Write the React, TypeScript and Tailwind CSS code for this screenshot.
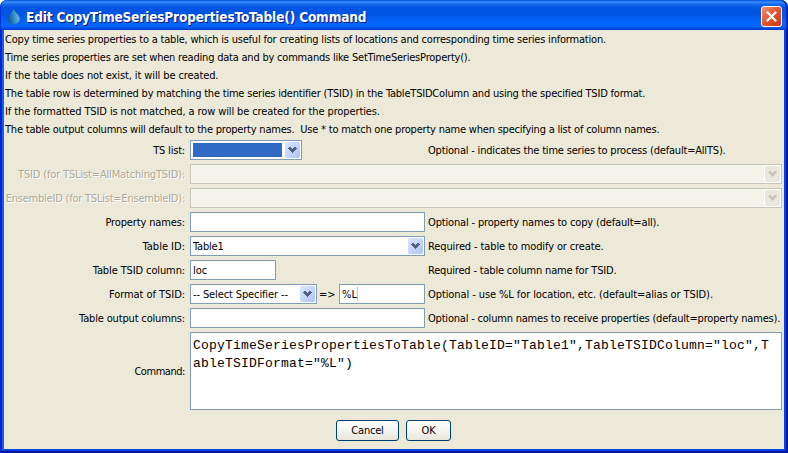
import type { ReactNode } from "react";

const sans = "font-['DejaVu_Sans_Condensed','DejaVu_Sans',sans-serif] [font-stretch:condensed]";

function Chevron({ disabled = false }: { disabled?: boolean }) {
  return (
    <div
      className={
        disabled
          ? "my-px mr-px flex w-[15px] shrink-0 items-center justify-center rounded-[2px] bg-[#e9e8df] shadow-[0_0_0_1px_#fff]"
          : "my-px mr-px flex w-[15px] shrink-0 items-center justify-center rounded-[2px] bg-linear-to-br from-[#dbe5ff] via-[#c5d5fc] to-[#adc2f5]"
      }
    >
      <svg width="9" height="6" viewBox="0 0 9 6" shapeRendering="crispEdges" className="shrink-0">
        <path
          d="M1 0h2v1h1v1h1v-1h1v-1h2v1h1v1h-1v1h-1v1h-1v1h-1v1h-1v-1h-1v-1h-1v-1h-1v-1h-1v-1h1z"
          fill={disabled ? "#c9c7ba" : "#4d6185"}
        />
      </svg>
    </div>
  );
}

function Combo({ className, disabled = false, children }: { className: string; disabled?: boolean; children?: ReactNode }) {
  return (
    <div
      className={`flex h-5 shrink-0 border ${disabled ? "border-[#c9c7ba] bg-[#f5f4ea]" : "border-[#7f9db9] bg-white"} ${className}`}
    >
      <div className="flex min-w-0 flex-1 items-center">{children}</div>
      <Chevron disabled={disabled} />
    </div>
  );
}

function Field({ className, children }: { className: string; children?: ReactNode }) {
  return <div className={`flex h-5 shrink-0 items-center border border-[#7f9db9] bg-white pl-0.5 ${className}`}>{children}</div>;
}

function Row({ label, labelClass = "", hint, hintClass = "", disabled = false, children }: {
  label: string; labelClass?: string; hint?: string; hintClass?: string; disabled?: boolean; children: ReactNode;
}) {
  return (
    <div className="flex h-5 items-center">
      <div className={`flex w-[182px] shrink-0 justify-end pt-0.5 pr-px whitespace-nowrap ${disabled ? "text-[#aca899] [text-shadow:1px_1px_0_#fff]" : ""}`}>
        <span className={labelClass}>{label}</span>
      </div>
      <div className={`ml-1 flex shrink-0 items-center ${hint ? "w-[238px]" : "w-[592px]"}`}>{children}</div>
      {hint && <span className={`pt-0.5 whitespace-nowrap ${hintClass}`}>{hint}</span>}
    </div>
  );
}

const notes = [
  { text: "Copy time series properties to a table, which is useful for creating lists of locations and corresponding time series information.", cls: "tracking-[-0.2px]" },
  { text: "Time series properties are set when reading data and by commands like SetTimeSeriesProperty().", cls: "tracking-[-0.21px]" },
  { text: "If the table does not exist, it will be created.", cls: "tracking-[-0.11px]" },
  { text: "The table row is determined by matching the time series identifier (TSID) in the TableTSIDColumn and using the specified TSID format.", cls: "tracking-[-0.205px]" },
  { text: "If the formatted TSID is not matched, a row will be created for the properties.", cls: "tracking-[-0.11px]" },
  { text: "The table output columns will default to the property names.\u00a0 Use * to match one property name when specifying a list of column names.", cls: "tracking-[-0.21px]" },
];

function DialogButton({ className, children }: { className: string; children: ReactNode }) {
  return (
    <button className={`flex h-[21px] items-center justify-center rounded-[3px] border border-[#003c74] bg-linear-to-b from-white via-[#f5f4ef] to-[#e8e6dc] pt-0.5 tracking-[-0.2px] ${className}`}>
      {children}
    </button>
  );
}

export default function App() {
  return (
    <div className={`flex h-[453px] w-[788px] flex-col overflow-hidden bg-white text-[11px] text-black ${sans}`}>
      <header className="flex h-[30px] shrink-0 items-center rounded-t-[7px] bg-[linear-gradient(#0058e0_0px,#3a8dff_2px,#1b6ef0_4px,#0256e3_7px,#0054e3_14px,#0461fa_21px,#0468ff_26px,#0050e4_28px,#003fd0_30px)] pt-[3px] shadow-[inset_1px_0_0_#0831d9,inset_-2px_0_1px_#0024b0]">
        <svg width="14" height="17" viewBox="0 0 14 17" className="ml-[7px]">
          <defs>
            <linearGradient id="drop" x1="0" y1="0.6" x2="1" y2="0.4">
              <stop offset="0" stopColor="#0e4f9c" />
              <stop offset="0.45" stopColor="#2a86c8" />
              <stop offset="1" stopColor="#86bede" />
            </linearGradient>
          </defs>
          <path d="M6.5 0.5C7.5 4 13 7 13 11a6.2 5.4 0 0 1-12.4 0C0.6 7.5 5.5 5 6.5 0.5z" fill="url(#drop)" stroke="#1a5ea8" strokeWidth="0.6" />
        </svg>
        <h1 className="ml-[5px] flex-1 pt-px text-[13.5px] font-bold tracking-[-0.14px] whitespace-nowrap text-white [text-shadow:1px_1px_0_#0a1883]">
          Edit CopyTimeSeriesPropertiesToTable() Command
        </h1>
        <button className="mr-[6px] flex size-[21px] items-center justify-center rounded-[3px] border border-white bg-linear-to-br from-[#ee9070] via-[#e2532c] to-[#c83c14]">
          <svg width="13" height="13" viewBox="0 0 13 13" className="shrink-0">
            <path d="M1.8 1.8l9.4 9.4M11.2 1.8l-9.4 9.4" stroke="#fff" strokeWidth="2.2" />
          </svg>
        </button>
      </header>
      <div className="flex min-h-0 flex-1 flex-col border-x-2 border-b-2 border-r-[#001a9c] border-b-[#0018a4] border-l-[#0420d4]">
        <main className="flex min-h-0 flex-1 flex-col border-x-2 border-b-2 border-r-[#0044ee] border-b-[#0044e4] border-l-[#1262e8] bg-[#ece9d8]">
          <div className="flex flex-col pl-px">
            {notes.map((n) => (
              <p key={n.text} className="flex h-[18px] items-center pt-0.5 whitespace-nowrap">
                <span className={n.cls}>{n.text}</span>
              </p>
            ))}
          </div>
          <div className="mt-0.5 flex flex-col gap-1">
            <Row label="TS list:" labelClass="tracking-[-0.2px]" hint="Optional - indicates the time series to process (default=AllTS)." hintClass="tracking-[-0.19px]">
              <Combo className="w-28">
                <div className="ml-0.5 h-3.5 w-[89px] bg-[#316ac5]" />
              </Combo>
            </Row>
            <Row disabled label="TSID (for TSList=AllMatchingTSID):" labelClass="tracking-[-0.16px]">
              <Combo disabled className="w-[592px]" />
            </Row>
            <Row disabled label="EnsembleID (for TSList=EnsembleID):" labelClass="tracking-[-0.22px]">
              <Combo disabled className="w-[592px]" />
            </Row>
            <Row label="Property names:" labelClass="tracking-[-0.13px]" hint="Optional - property names to copy (default=all)." hintClass="tracking-[-0.16px]">
              <Field className="w-[235px]" />
            </Row>
            <Row label="Table ID:" hint="Required - table to modify or create." hintClass="tracking-[-0.12px]">
              <Combo className="w-[235px]">
                <span className="pt-0.5 pl-0.5 tracking-[-0.2px]">Table1</span>
              </Combo>
            </Row>
            <Row label="Table TSID column:" labelClass="tracking-[-0.12px]" hint="Required - table column name for TSID." hintClass="tracking-[-0.19px]">
              <Field className="w-[86px]">
                <span className="pt-0.5">loc</span>
              </Field>
            </Row>
            <Row label="Format of TSID:" labelClass="tracking-[-0.05px]" hint="Optional - use %L for location, etc. (default=alias or TSID)." hintClass="tracking-[-0.09px]">
              <Combo className="w-[127px]">
                <span className="pt-0.5 pl-0.5 tracking-[-0.12px] whitespace-nowrap">-- Select Specifier --</span>
              </Combo>
              <span className="w-[22px] pt-0.5 pl-0.5">=&gt;</span>
              <Field className="w-[86px]">
                <span className="pt-0.5">%L</span>
                <i className="h-3.5 w-px bg-[#c0c0c0]" />
              </Field>
            </Row>
            <Row label="Table output columns:" labelClass="tracking-[-0.16px]" hint="Optional - column names to receive properties (default=property names)." hintClass="tracking-[-0.2px]">
              <Field className="w-[235px]" />
            </Row>
            <div className="flex h-[78px] items-center">
              <div className="w-[182px] pt-0.5 pr-px text-right tracking-[-0.45px]">Command:</div>
              <div className="ml-1 h-full w-[592px] border border-[#7f9db9] bg-white pt-1 pl-0.5 font-['Liberation_Mono',monospace] text-[13px] leading-[18px] tracking-[0.2px] whitespace-pre">
                {'CopyTimeSeriesPropertiesToTable(TableID="Table1",TableTSIDColumn="loc",T\nableTSIDFormat="%L")'}
              </div>
            </div>
          </div>
          <div className="mt-2.5 ml-[332px] flex gap-[7px]">
            <DialogButton className="w-[63px]">Cancel</DialogButton>
            <DialogButton className="w-[45px]">OK</DialogButton>
          </div>
        </main>
      </div>
    </div>
  );
}
